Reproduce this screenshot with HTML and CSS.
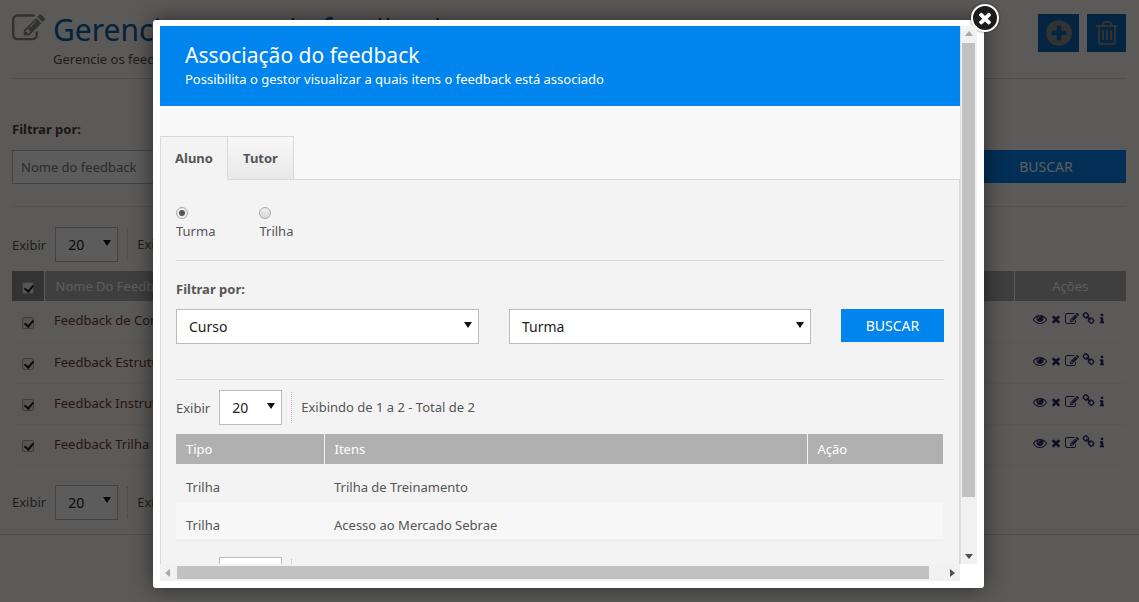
FILE: index.html
```html
<!DOCTYPE html>
<html lang="pt-BR">
<head>
<meta charset="utf-8">
<title>Gerenciamento de feedback</title>
<link rel="stylesheet" href="styles.css">
</head>
<body>
<svg class="defs" width="0" height="0" aria-hidden="true">
  <symbol id="i-times" viewBox="0 0 1792 1792"><path d="M1490 1322q0 40-28 68l-136 136q-28 28-68 28t-68-28l-294-294-294 294q-28 28-68 28t-68-28l-136-136q-28-28-28-68t28-68l294-294-294-294q-28-28-28-68t28-68l136-136q28-28 68-28t68 28l294 294 294-294q28-28 68-28t68 28l136 136q28 28 28 68t-28 68l-294 294 294 294q28 28 28 68z"/></symbol>
  <symbol id="i-plus" viewBox="0 0 1792 1792"><path d="M1344 960v-128q0-26-19-45t-45-19h-256v-256q0-26-19-45t-45-19h-128q-26 0-45 19t-19 45v256h-256q-26 0-45 19t-19 45v128q0 26 19 45t45 19h256v256q0 26 19 45t45 19h128q26 0 45-19t19-45v-256h256q26 0 45-19t19-45zm320-64q0 209-103 385.5t-279.5 279.5-385.5 103-385.5-103-279.5-279.5-103-385.5 103-385.5 279.5-279.5 385.5-103 385.5 103 279.5 279.5 103 385.5z"/></symbol>
  <symbol id="i-trash" viewBox="0 0 1792 1792"><path d="M704 736v576q0 14-9 23t-23 9h-64q-14 0-23-9t-9-23v-576q0-14 9-23t23-9h64q14 0 23 9t9 23zm256 0v576q0 14-9 23t-23 9h-64q-14 0-23-9t-9-23v-576q0-14 9-23t23-9h64q14 0 23 9t9 23zm256 0v576q0 14-9 23t-23 9h-64q-14 0-23-9t-9-23v-576q0-14 9-23t23-9h64q14 0 23 9t9 23zm128 724v-948h-896v948q0 22 7 40.5t14.5 27 10.5 8.5h832q3 0 10.5-8.5t14.5-27 7-40.5zm-672-1076h448l-48-117q-7-9-17-11h-317q-10 2-17 11zm928 32v64q0 14-9 23t-23 9h-96v948q0 83-47 143.5t-113 60.5h-832q-66 0-113-58.5t-47-141.5v-952h-96q-14 0-23-9t-9-23v-64q0-14 9-23t23-9h309l70-167q15-37 54-63t79-26h320q40 0 79 26t54 63l70 167h309q14 0 23 9t9 23z"/></symbol>
  <symbol id="i-edit" viewBox="0 0 1792 1792"><path d="M888 1184l116-116-152-152-116 116v56h96v96h56zm440-720q-16-16-33 1l-350 350q-17 17-1 33t33-1l350-350q17-17 1-33zm80 594v190q0 119-84.5 203.5t-203.5 84.5h-832q-119 0-203.5-84.5t-84.5-203.5v-832q0-119 84.5-203.5t203.5-84.5h832q63 0 117 25 15 7 18 23 3 17-9 29l-49 49q-14 14-32 8-23-6-45-6h-832q-66 0-113 47t-47 113v832q0 66 47 113t113 47h832q66 0 113-47t47-113v-126q0-13 9-22l64-64q15-15 35-7t20 29zm-96-738l288 288-672 672h-288v-288zm444 132l-92 92-288-288 92-92q28-28 68-28t68 28l152 152q28 28 28 68t-28 68z"/></symbol>
  <symbol id="i-eye" viewBox="0 0 1792 1792"><path d="M1664 960q-152-236-381-353 61 104 61 225 0 185-131.5 316.5t-316.5 131.5-316.5-131.5-131.5-316.5q0-121 61-225-229 117-381 353 133 205 333.5 326.5t434.5 121.5 434.5-121.5 333.5-326.5zm-720-384q0-20-14-34t-34-14q-125 0-214.5 89.5t-89.5 214.5q0 20 14 34t34 14 34-14 14-34q0-86 61-147t147-61q20 0 34-14t14-34zm848 384q0 34-20 69-140 230-376.5 368.5t-499.5 138.5-499.5-139-376.5-368q-20-35-20-69t20-69q140-229 376.5-368t499.5-139 499.5 139 376.5 368q20 35 20 69z"/></symbol>
  <symbol id="i-link" viewBox="0 0 1792 1792"><path d="M1520 1216q0-40-28-68l-208-208q-28-28-68-28-42 0-72 32 3 3 19 18.5t21.5 21.5 15 19 13 25.5 3.5 27.5q0 40-28 68t-68 28q-15 0-27.5-3.5t-25.5-13-19-15-21.5-21.5-18.5-19q-33 31-33 73 0 40 28 68l206 207q27 27 68 27 40 0 68-26l147-146q28-28 28-67zm-703-705q0-40-28-68l-206-207q-28-28-68-28-39 0-68 27l-147 146q-28 28-28 67 0 40 28 68l208 208q27 27 68 27 42 0 72-31-3-3-19-18.5t-21.5-21.5-15-19-13-25.5-3.5-27.5q0-40 28-68t68-28q15 0 27.5 3.5t25.5 13 19 15 21.5 21.5 18.5 19q33-31 33-73zm895 705q0 120-85 203l-147 146q-83 83-203 83-121 0-204-85l-206-207q-83-83-83-203 0-123 88-209l-88-88q-86 88-208 88-120 0-204-84l-208-208q-84-84-84-204t85-203l147-146q83-83 203-83 121 0 204 85l206 207q83 83 83 203 0 123-88 209l88 88q86-88 208-88 120 0 204 84l208 208q84 84 84 204z"/></symbol>
  <symbol id="i-info" viewBox="0 0 1792 1792"><path d="M1216 1344v128q0 26-19 45t-45 19h-512q-26 0-45-19t-19-45v-128q0-26 19-45t45-19h64v-384h-64q-26 0-45-19t-19-45v-128q0-26 19-45t45-19h384q26 0 45 19t19 45v576h64q26 0 45 19t19 45zm-128-1152v192q0 26-19 45t-45 19h-256q-26 0-45-19t-19-45v-192q0-26 19-45t45-19h256q26 0 45 19t19 45z"/></symbol>
</svg>

<main class="page">
  <header class="page-head">
    <svg class="head-icon"><use href="#i-edit"/></svg>
    <div class="head-text">
      <h1>Gerenciamento de feedback</h1>
      <p>Gerencie os feedbacks cadastrados na plataforma</p>
    </div>
    <div class="head-actions">
      <button class="square"><svg class="sq-plus"><use href="#i-plus"/></svg></button>
      <button class="square narrow"><svg class="sq-trash"><use href="#i-trash"/></svg></button>
    </div>
  </header>
  <hr class="rule-head">

  <section class="page-filter">
    <strong>Filtrar por:</strong>
    <div class="filter-row">
      <div class="fake-input">Nome do feedback</div>
      <button class="btn-page">BUSCAR</button>
    </div>
  </section>

  <div class="pager pager-top">
    <span>Exibir</span>
    <span class="select short"><select><option>20</option></select></span>
    <span class="pager-info">Exibindo de 1 a 4 - Total de 4</span>
  </div>

  <table class="page-table">
    <thead>
      <tr>
        <th class="c-check"><span class="check"></span></th>
        <th class="c-name">Nome Do Feedback</th>
        <th class="c-act">Ações</th>
      </tr>
    </thead>
    <tbody>
      <tr>
        <td class="c-check"><span class="check"></span></td>
        <td>Feedback de Conteúdo</td>
        <td class="c-act"><span class="acts"><svg class="a-eye"><use href="#i-eye"/></svg><svg class="a-x"><use href="#i-times"/></svg><svg class="a-edit"><use href="#i-edit"/></svg><svg class="a-link"><use href="#i-link"/></svg><svg class="a-info"><use href="#i-info"/></svg></span></td>
      </tr>
      <tr>
        <td class="c-check"><span class="check"></span></td>
        <td>Feedback Estrutura</td>
        <td class="c-act"><span class="acts"><svg class="a-eye"><use href="#i-eye"/></svg><svg class="a-x"><use href="#i-times"/></svg><svg class="a-edit"><use href="#i-edit"/></svg><svg class="a-link"><use href="#i-link"/></svg><svg class="a-info"><use href="#i-info"/></svg></span></td>
      </tr>
      <tr>
        <td class="c-check"><span class="check"></span></td>
        <td>Feedback Instrutor</td>
        <td class="c-act"><span class="acts"><svg class="a-eye"><use href="#i-eye"/></svg><svg class="a-x"><use href="#i-times"/></svg><svg class="a-edit"><use href="#i-edit"/></svg><svg class="a-link"><use href="#i-link"/></svg><svg class="a-info"><use href="#i-info"/></svg></span></td>
      </tr>
      <tr>
        <td class="c-check"><span class="check"></span></td>
        <td>Feedback Trilha</td>
        <td class="c-act"><span class="acts"><svg class="a-eye"><use href="#i-eye"/></svg><svg class="a-x"><use href="#i-times"/></svg><svg class="a-edit"><use href="#i-edit"/></svg><svg class="a-link"><use href="#i-link"/></svg><svg class="a-info"><use href="#i-info"/></svg></span></td>
      </tr>
    </tbody>
  </table>

  <div class="pager pager-bottom">
    <span>Exibir</span>
    <span class="select short"><select><option>20</option></select></span>
    <span class="pager-info">Exibindo de 1 a 4 - Total de 4</span>
  </div>
  <hr class="rule-foot">
</main>

<div class="overlay"></div>

<div class="modal" role="dialog">
  <button class="close"><svg><use href="#i-times"/></svg></button>
  <div class="modal-grid">
    <div class="modal-body">
      <div class="banner">
        <h2>Associação do feedback</h2>
        <p>Possibilita o gestor visualizar a quais itens o feedback está associado</p>
      </div>
      <div class="tabs">
        <span class="tab active">Aluno</span>
        <span class="tab">Tutor</span>
      </div>
      <div class="panel">
        <div class="radios">
          <label class="radio-item"><span class="radio on"></span>Turma</label>
          <label class="radio-item"><span class="radio"></span>Trilha</label>
        </div>
        <hr class="rule">
        <strong class="filter-label">Filtrar por:</strong>
        <div class="filter-line">
          <span class="select wide"><select><option>Curso</option></select></span>
          <span class="select wide"><select><option>Turma</option></select></span>
          <button class="btn-search">BUSCAR</button>
        </div>
        <hr class="rule rule-2">
        <div class="pager pager-modal">
          <span>Exibir</span>
          <span class="select short"><select><option>20</option></select></span>
          <span class="pager-info">Exibindo de 1 a 2 - Total de 2</span>
        </div>
        <table class="modal-table">
          <thead>
            <tr><th class="m-tipo">Tipo</th><th class="m-itens">Itens</th><th>Ação</th></tr>
          </thead>
          <tbody>
            <tr><td>Trilha</td><td>Trilha de Treinamento</td><td></td></tr>
            <tr class="even"><td>Trilha</td><td>Acesso ao Mercado Sebrae</td><td></td></tr>
          </tbody>
        </table>
        <div class="pager pager-modal-2">
          <span class="hidden-label">Exibir</span>
          <span class="select short"><select><option>20</option></select></span>
          <span class="pager-info"></span>
        </div>
      </div>
    </div>
    <div class="vbar">
      <span class="arrow up"></span>
      <span class="vthumb"></span>
      <span class="arrow down"></span>
    </div>
    <div class="hbar">
      <span class="arrow left"></span>
      <span class="hthumb"></span>
      <span class="arrow right"></span>
    </div>
    <div class="corner"></div>
  </div>
</div>
</body>
</html>
```

FILE: styles.css
```css
* { box-sizing: border-box; }
html, body { margin: 0; height: 602px; overflow: hidden; }
body {
  background: #fbf9f6;
  font-family: "Noto Sans", "DejaVu Sans", sans-serif;
  font-size: 14px;
  color: #555;
  position: relative;
}
.defs { position: absolute; }
svg { fill: currentColor; display: block; }
button { border: 0; font-family: inherit; padding: 0; }

/* ---------- underlying page ---------- */
.page { padding: 0 13px 0 12px; height: 602px; }
.page-head { display: flex; height: 78px; }
.head-icon { width: 33px; height: 33px; margin-top: 12px; color: #888; }
.head-text { margin-left: 8px; flex: 1; }
h1 { margin: 9px 0 0; font-size: 30px; line-height: 42px; font-weight: 400; color: #0a5ea8; }
.head-text p { margin: -1px 0 0; font-size: 13px; line-height: 18px; }
.head-actions { display: flex; gap: 8px; padding-top: 14px; align-items: flex-start; }
.square { width: 41px; height: 38px; background: #0a66b8; display: flex; align-items: center; justify-content: center; color: #8c8c8c; }
.square.narrow { width: 39px; }
.sq-plus { width: 30px; height: 30px; }
.sq-trash { width: 28px; height: 28px; }
.rule-head { border: 0; border-top: 1px solid #d9d7d4; margin: 0 0 15px; }
.page-filter { margin: 0 -13px 0 -12px; padding: 27px 13px 20px 12px; border-top: 1px solid #d9d7d4; border-bottom: 1px solid #e6e4e1; height: 113px; margin-left: 0; margin-right: 0; padding-left: 0; padding-right: 0; border-top: 0; }
.page-filter strong { display: block; font-size: 13px; line-height: 18px; margin-top: -1px; color: #444; }
.filter-row { display: flex; justify-content: space-between; margin-top: 12px; }
.fake-input { width: 400px; height: 34px; border: 1px solid #bbb; padding: 0 8px; line-height: 32px; font-size: 13px; background: #fff; color: #777; }
.btn-page { width: 160px; height: 33px; background: #0a84ee; color: #fff; font-size: 14px; }

.pager { display: flex; align-items: center; font-size: 13px; }
.pager-top { height: 35px; margin-top: 20px; }
.pager-bottom { height: 35px; margin-top: 19px; }
.pager-info { margin-left: 9px; padding-left: 9px; height: 31px; line-height: 31px; border-left: 1px dotted #bbb; }
.select { position: relative; display: inline-block; }
.select::after {
  content: ""; position: absolute; right: 7px; top: 50%; margin-top: -5px;
  border: 4px solid transparent; border-top: 6px solid #111; border-bottom: 0;
}
.select select {
  appearance: none; -webkit-appearance: none; width: 100%; height: 100%; display: block;
  border: 1px solid #bbb; border-radius: 0; background: #fff; color: #222;
  font-family: "Noto Sans", sans-serif; font-size: 14px; padding: 0 12px; outline: 0;
}
.short { width: 63px; height: 35px; margin-left: 9px; }
.wide { height: 35px; }

.page-table { width: 100%; border-collapse: collapse; margin-top: 9px; font-size: 13px; }
.page-table th { height: 30px; background: #b0b0b0; color: #fff; font-weight: 400; text-align: left; padding: 0 11px; border-left: 1px solid #fff; }
.page-table th:first-child { border-left: 0; background: #8e8e8e; }
.page-table td { height: 41px; padding: 0 10px 2px; border-bottom: 1px solid #f4f2ef; color: #6b3c38; }
.page-table .c-check { width: 32px; padding: 0; text-align: center; }
.page-table .c-act { width: 112px; text-align: center; padding: 0; }
.check { display: inline-block; width: 12px; height: 12px; border: 1px solid #aaa; background: #eee; border-radius: 2px; position: relative; vertical-align: middle; }
.check::after { content: ""; position: absolute; left: 3px; top: 0; width: 4px; height: 7px; border: solid #222; border-width: 0 2px 2px 0; transform: rotate(40deg); }
.acts { display: inline-flex; align-items: center; gap: 3px; color: #2a2a6a; }
.a-eye { width: 14px; height: 14px; }
.a-x { width: 12px; height: 12px; }
.a-edit { width: 14px; height: 14px; }
.a-link { width: 13px; height: 13px; margin-top: -2px; }
.a-info { width: 12px; height: 14px; margin-left: -2px; }
.rule-foot { border: 0; border-top: 1px solid #d9d7d4; margin: 14px -13px 0 -12px; }

/* ---------- overlay + modal ---------- */
.overlay { position: fixed; inset: 0; background: rgba(0,0,0,.64); }
.modal {
  position: absolute; left: 153px; top: 20px; width: 831px; height: 568px;
  background: #fff; border-radius: 3px; padding: 6px 7px 7px;
  box-shadow: 0 0 22px rgba(0,0,0,.55);
}
.close {
  position: absolute; top: -16px; right: -15px; width: 28px; height: 28px;
  border-radius: 50%; background: #1c1c1c; border: 2px solid #fff; color: #fff;
  display: flex; align-items: center; justify-content: center;
  box-shadow: 0 0 3px rgba(0,0,0,.6);
}
.close svg { width: 18px; height: 18px; }
.modal-grid { display: grid; grid-template-columns: 800px 17px; grid-template-rows: 538px 17px; height: 555px; }
.modal-body { background: #f9f9f9; overflow: hidden; }
.banner { height: 80px; background: #0084ee; color: #fff; padding: 15px 25px 0; }
.banner h2 { margin: 0; font-size: 21px; line-height: 28px; font-weight: 400; }
.banner p { margin: 0; font-size: 13px; line-height: 20px; }
.tabs { display: flex; margin-top: 30px; height: 44px; }
.tab { width: 66px; border: 1px solid #d8d8d8; border-left: 0; border-bottom: 1px solid #d8d8d8; background: linear-gradient(#f7f7f7, #e9e9e9); font-size: 13px; font-weight: 700; color: #555; text-align: center; line-height: 42px; }
.tab.active { width: 68px; border-left: 1px solid #d8d8d8; background: #f3f3f3; border-bottom-color: #f3f3f3; }
.tabs::after { content: ""; flex: 1; border-bottom: 1px solid #d8d8d8; }
.panel { height: 400px; background: #f3f3f3; border: 1px solid #d8d8d8; border-top: 0; padding: 0 15px; }
.radios { display: flex; gap: 44px; padding-top: 27px; height: 80px; font-size: 13px; }
.radio-item { display: flex; flex-direction: column; align-items: flex-start; line-height: 18px; color: #555; }
.radio { width: 12px; height: 12px; border-radius: 50%; border: 1px solid #aaa; background: linear-gradient(#eee, #d8d8d8); margin-bottom: 3px; position: relative; }
.radio.on { background: #eee; }
.radio.on::after { content: ""; position: absolute; left: 2px; top: 2px; width: 6px; height: 6px; border-radius: 50%; background: #555; }
.rule { border: 0; border-top: 1px solid #d8d8d8; margin: 0; }
.filter-label { display: block; margin-top: 19px; font-size: 13px; line-height: 18px; color: #555; }
.filter-line { display: flex; margin-top: 11px; height: 35px; align-items: flex-start; }
.filter-line .wide:nth-child(1) { width: 303px; }
.filter-line .wide:nth-child(2) { width: 302px; margin-left: 30px; }
.btn-search { width: 103px; height: 33px; margin-left: 30px; background: #0084ee; color: #fff; font-size: 14px; }
.rule-2 { margin-top: 35px; }
.pager-modal { height: 35px; margin-top: 10px; }
.modal-table { width: 767px; border-collapse: collapse; margin-top: 9px; font-size: 13px; table-layout: fixed; }
.modal-table th { height: 30px; background: #b0b0b0; color: #fff; font-weight: 400; text-align: left; padding: 0 10px; border-left: 1px solid #f3f3f3; }
.modal-table th:first-child { border-left: 0; }
.m-tipo { width: 148px; }
.m-itens { width: 483px; }
.modal-table td { height: 37px; padding: 14px 10px 0; line-height: 18px; vertical-align: top; border-bottom: 1px solid #f0f0f0; }
.modal-table tr.even td { background: #f7f7f7; border-bottom: 3px solid #efefef; height: 39px; }
.pager-modal-2 { margin-top: 15px; }
.hidden-label { visibility: hidden; }

/* ---------- painted scrollbars ---------- */
.vbar { background: #f1f1f1; border-left: 1px solid #ddd; display: flex; flex-direction: column; align-items: center; position: relative; }
.vthumb { position: absolute; left: 1px; top: 17px; width: 13px; height: 454px; background: #c1c1c1; }
.hbar { background: #f1f1f1; position: relative; }
.hthumb { position: absolute; left: 17px; top: 2px; width: 752px; height: 13px; background: #c1c1c1; }
.corner { background: #fff; }
.arrow { position: absolute; width: 0; height: 0; border: 4px solid transparent; }
.arrow.up { top: 5px; left: 4px; border-top: 0; border-bottom: 5px solid #a8a8a8; }
.arrow.down { bottom: 5px; left: 4px; border-bottom: 0; border-top: 5px solid #505050; }
.arrow.left { left: 5px; top: 5px; border-left: 0; border-right: 5px solid #a8a8a8; }
.arrow.right { right: 5px; top: 5px; border-right: 0; border-left: 5px solid #505050; }
```
